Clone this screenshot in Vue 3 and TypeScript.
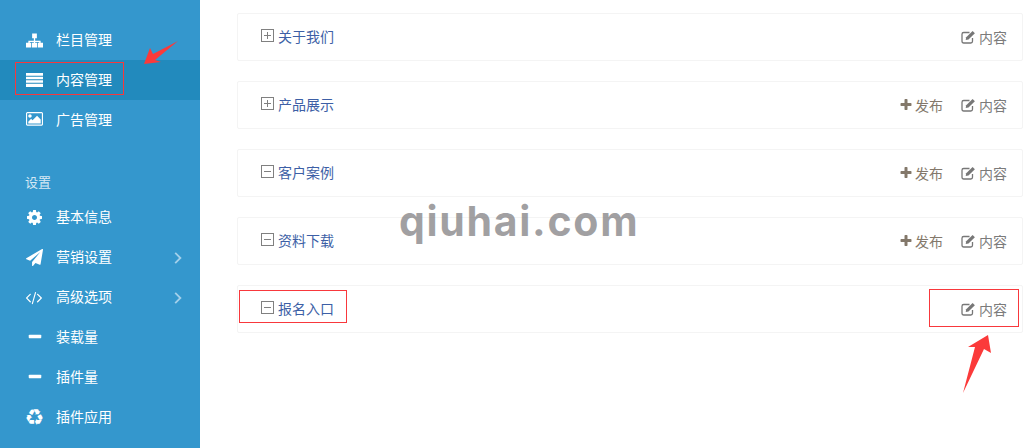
<template>
  <div class="page">
    <!-- Sidebar -->
    <aside class="sidebar">
      <ul class="menu">
        <li v-for="item in topMenu" :key="item.label" :class="['menu-item', { active: item.active }]">
          <span class="menu-icon">
            <svg :viewBox="icons[item.icon].box" :width="icons[item.icon].w" :height="icons[item.icon].h" fill="currentColor"><path :d="icons[item.icon].d" /></svg>
          </span>
          <span class="menu-label">{{ item.label }}</span>
        </li>
      </ul>
      <h4 class="menu-title">设置</h4>
      <ul class="menu">
        <li v-for="item in settingsMenu" :key="item.label" class="menu-item">
          <span class="menu-icon">
            <span v-if="item.icon === 'recycle'" class="recycle">♻</span>
            <svg v-else :viewBox="icons[item.icon].box" :width="icons[item.icon].w" :height="icons[item.icon].h" fill="currentColor"><path :d="icons[item.icon].d" /></svg>
          </span>
          <span class="menu-label">{{ item.label }}</span>
          <svg v-if="item.more" class="chevron" viewBox="0 0 8 12" width="8" height="12" fill="none" stroke="currentColor" stroke-width="1.8"><path d="M1.200 .8 6.400 6 1.200 11.200" /></svg>
        </li>
      </ul>
    </aside>

    <!-- Content -->
    <main class="content">
      <div v-for="row in rows" :key="row.title" class="row">
        <span class="tree-box">
          <svg viewBox="0 0 13 13" width="13" height="13" fill="none" stroke="#808080"><rect x=".5" y=".5" width="12" height="12" /><path d="M3 6.500h7" /><path v-if="!row.open" d="M6.500 3v7" /></svg>
        </span>
        <a class="row-title">{{ row.title }}</a>
        <div class="row-actions">
          <a v-if="row.publish" class="action publish">
            <svg viewBox="0 0 1792 1792" width="14" height="14" fill="#83786a"><path :d="icons.plus.d" /></svg>发布
          </a>
          <a class="action">
            <svg class="pencil" viewBox="0 0 15 14" width="15" height="14"><path d="M11.500 8v3.200c0 1-.7 1.800-1.700 1.800H2.700C1.700 13 1 12.200 1 11.200V4.300C1 3.300 1.700 2.500 2.700 2.500H8.500" fill="none" stroke="#777" stroke-width="1.300" /><path d="M5.200 7.300 11.600 .9l2.300 2.300L7.500 9.600l-2.800.5z" fill="#777" /></svg>内容
          </a>
        </div>
      </div>
    </main>

    <!-- Annotations drawn over the screenshot -->
    <div class="mark mark-menu"></div>
    <div class="mark mark-title"></div>
    <div class="mark mark-action"></div>
    <svg class="arrows" viewBox="0 0 1034 448" width="1034" height="448" fill="#fb3a3a">
      <polygon points="178,41 155,60 161,62 144,64 150,48 153,54" />
      <polygon points="988,335 991,353 984,349 963,393 975,347 968,347" />
    </svg>
    <div class="watermark">qiuhai.com</div>
  </div>
</template>

<script setup lang="ts">
interface MenuItem {
  label: string
  icon: string
  active?: boolean
  more?: boolean
}

interface Row {
  title: string
  open: boolean
  publish: boolean
}

const icons: Record<string, { box: string; w: number; h: number; d: string }> = {
  sitemap: {
    box: '0 0 18 15',
    w: 17,
    h: 15,
    d: 'M6.500 0h5v5h-5zM8.300 5h1.400v2.700h5.800V10H14V9.100H9.700V10H8.300V9.100H4V10H2.500V7.700h5.800zM0 10h5.500v5H0zM6.300 10h5.400v5H6.300zM12.500 10H18v5h-5.500z'
  },
  list: {
    box: '0 0 17 14',
    w: 17,
    h: 14,
    d: 'M0 0h17v2.800H0zM0 3.700h17v2.600H0zM0 7.200h17v2.600H0zM0 10.700h17V14H0z'
  },
  picture: {
    box: '0 0 1920 1792',
    w: 18,
    h: 16,
    d: 'M640 448q0 80-56 136t-136 56-136-56-56-136 56-136 136-56 136 56 56 136zm1024 384v448h-1408v-192l320-320 160 160 512-512zm96-704h-1600q-13 0-22.500 9.500t-9.500 22.500v1216q0 13 9.500 22.500t22.500 9.500h1600q13 0 22.500-9.500t9.500-22.500v-1216q0-13-9.500-22.500t-22.500-9.500zm160 32v1216q0 66-47 113t-113 47h-1600q-66 0-113-47t-47-113v-1216q0-66 47-113t113-47h1600q66 0 113 47t47 113z'
  },
  cog: {
    box: '128 128 1536 1536',
    w: 15,
    h: 15,
    d: 'M1152 896q0-106-75-181t-181-75-181 75-75 181 75 181 181 75 181-75 75-181zm512-109v222q0 12-8 23t-20 13l-185 28q-19 54-39 91 35 50 107 138 10 12 10 25t-9 23q-27 37-99 108t-94 71q-12 0-26-9l-138-108q-44 23-91 38-16 136-29 186-7 28-36 28h-222q-14 0-24.500-8.500t-11.500-21.500l-28-184q-49-16-90-37l-141 107q-10 9-25 9-14 0-25-11-126-114-165-168-7-10-7-23 0-12 8-23 15-21 51-66.500t54-70.500q-27-50-41-99l-183-27q-13-2-21-12.500t-8-23.500v-222q0-12 8-23t19-13l186-28q14-46 39-92-40-57-107-138-10-12-10-24 0-10 9-23 26-36 98.500-107.500t94.500-71.500q13 0 26 10l138 107q44-23 91-38 16-136 29-186 7-28 36-28h222q14 0 24.500 8.500t11.500 21.500l28 184q49 16 90 37l142-107q9-9 24-9 13 0 25 10 129 119 165 170 7 8 7 22 0 12-8 23-15 21-51 66.500t-54 70.500q26 50 41 98l183 28q13 2 21 12.500t8 23.500z'
  },
  plane: {
    box: '0 0 1792 1792',
    w: 17,
    h: 17,
    d: 'M1764 11q33 24 27 64l-256 1536q-5 29-32 45-14 8-31 8-11 0-24-5l-453-185-242 295q-18 23-49 23-13 0-22-4-19-7-30.500-23.500t-11.500-36.500v-349l864-1059-1069 925-395-162q-37-14-40-55-2-40 32-59l1664-960q15-9 32-9 20 0 36 11z'
  },
  code: {
    box: '0 0 1920 1792',
    w: 18,
    h: 17,
    d: 'M553 1399l-50 50q-10 10-23 10t-23-10l-466-466q-10-10-10-23t10-23l466-466q10-10 23-10t23 10l50 50q10 10 10 23t-10 23l-393 393 393 393q10 10 10 23t-10 23zm591-1067l-373 1291q-4 13-15.500 19.500t-23.500 2.500l-62-17q-13-4-19.500-15.500t-2.500-24.500l373-1291q4-13 15.500-19.500t23.500-2.500l62 17q13 4 19.500 15.500t2.500 24.500zm657 651l-466 466q-10 10-23 10t-23-10l-50-50q-10-10-10-23t10-23l393-393-393-393q-10-10-10-23t10-23l50-50q10-10 23-10t23 10l466 466q10 10 10 23t-10 23z'
  },
  minus: {
    box: '0 0 1792 1792',
    w: 16,
    h: 16,
    d: 'M1600 736v192q0 40-28 68t-68 28h-1216q-40 0-68-28t-28-68v-192q0-40 28-68t68-28h1216q40 0 68 28t28 68z'
  },
  plus: {
    box: '0 0 1792 1792',
    w: 15,
    h: 15,
    d: 'M1600 736v192q0 40-28 68t-68 28h-416v416q0 40-28 68t-68 28h-192q-40 0-68-28t-28-68v-416h-416q-40 0-68-28t-28-68v-192q0-40 28-68t68-28h416v-416q0-40 28-68t68-28h192q40 0 68 28t28 68v416h416q40 0 68 28t28 68z'
  }
}

const topMenu: MenuItem[] = [
  { label: '栏目管理', icon: 'sitemap' },
  { label: '内容管理', icon: 'list', active: true },
  { label: '广告管理', icon: 'picture' }
]

const settingsMenu: MenuItem[] = [
  { label: '基本信息', icon: 'cog' },
  { label: '营销设置', icon: 'plane', more: true },
  { label: '高级选项', icon: 'code', more: true },
  { label: '装载量', icon: 'minus' },
  { label: '插件量', icon: 'minus' },
  { label: '插件应用', icon: 'recycle' }
]

const rows: Row[] = [
  { title: '关于我们', open: false, publish: false },
  { title: '产品展示', open: false, publish: true },
  { title: '客户案例', open: true, publish: true },
  { title: '资料下载', open: true, publish: true },
  { title: '报名入口', open: true, publish: false }
]
</script>

<style>
body {
  background: #fff;
}
</style>

<style scoped>
.page {
  position: relative;
  display: flex;
  width: 1034px;
  height: 448px;
  overflow: hidden;
  font-family: "Noto Sans CJK SC", "Open Sans", sans-serif;
  font-size: 14px;
}

.sidebar {
  width: 200px;
  flex-shrink: 0;
  padding-top: 20px;
  box-sizing: border-box;
  background: #3497cd;
  color: #fff;
}

.menu {
  list-style: none;
  margin: 0;
  padding: 0;
}

.menu-item {
  position: relative;
  display: flex;
  align-items: center;
  height: 40px;
  padding-left: 26px;
}

.menu-item.active {
  background: #228abd;
}

.menu-icon {
  display: flex;
  align-items: center;
  justify-content: center;
  width: 17px;
  height: 15px;
  margin-right: 13px;
}

.menu-label {
  margin-top: -2px;
}

.recycle {
  font-family: "DejaVu Sans", sans-serif;
  font-size: 22px;
  line-height: 15px;
}

.chevron {
  position: absolute;
  left: 174px;
  top: 15px;
  color: #a3d0ea;
}

.menu-title {
  margin: 32px 0 5px;
  padding-left: 25px;
  height: 20px;
  line-height: 20px;
  font-size: 13px;
  font-weight: 400;
  color: #d5e8f4;
}

.content {
  flex: 1;
  padding: 13px 11px 0 37px;
}

.row {
  display: flex;
  align-items: center;
  box-sizing: border-box;
  height: 48px;
  margin-bottom: 20px;
  padding: 0 15px 0 23px;
  border: 1px solid #f4f4f4;
  border-radius: 2px;
}

.tree-box {
  display: flex;
  margin: -3px 4px 0 0;
}

.row-title {
  margin-top: -3px;
  color: #3d5fa6;
  font-size: 14px;
}

.row-actions {
  display: flex;
  margin-left: auto;
  gap: 18px;
}

.action {
  display: flex;
  align-items: center;
  color: #7b7b7b;
}

.action svg {
  margin-right: 3px;
}

.publish {
  color: #83786a;
}

.publish svg {
  margin-right: 2px;
}

/* red marks on top of the page */
.mark {
  position: absolute;
  box-sizing: border-box;
  border: 1px solid #f8383c;
}

.mark-menu {
  left: 15px;
  top: 62px;
  width: 109px;
  height: 33px;
}

.mark-title {
  left: 239px;
  top: 290px;
  width: 108px;
  height: 33px;
}

.mark-action {
  left: 929px;
  top: 289px;
  width: 90px;
  height: 38px;
}

.arrows {
  position: absolute;
  left: 0;
  top: 0;
}

.watermark {
  position: absolute;
  left: 399px;
  top: 196px;
  color: rgba(125, 123, 126, 0.72);
  font-family: Inter, sans-serif;
  font-size: 41px;
  font-weight: 700;
  line-height: 50px;
  letter-spacing: 1.7px;
}
</style>
